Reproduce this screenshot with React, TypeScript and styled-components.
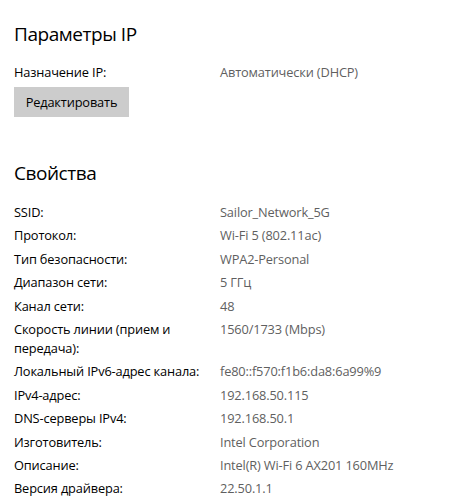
import React from 'react';
import styled, { createGlobalStyle } from 'styled-components';

const GlobalStyle = createGlobalStyle`
  body {
    margin: 0;
    background: #ffffff;
    font-family: 'Open Sans', 'Noto Sans', sans-serif;
    color: #000000;
  }
`;

const Page = styled.div`
  padding: 20px 14px 0 14px;
  display: flex;
  flex-direction: column;
`;

const Heading = styled.h2<{ gapAfter: number }>`
  margin: 0 0 ${({ gapAfter }) => gapAfter}px 0;
  font-size: 19px;
  line-height: 28px;
  font-weight: 400;
  letter-spacing: -0.45px;
`;

const Grid = styled.div`
  display: grid;
  grid-template-columns: 200px 1fr;
  column-gap: 6px;
  row-gap: 4.4px;
`;

const Label = styled.div`
  font-size: 12.8px;
  line-height: 19px;
  letter-spacing: -0.15px;
  color: #000000;
`;

const Value = styled.div`
  font-size: 12.8px;
  line-height: 19px;
  letter-spacing: -0.15px;
  color: #5f5f5f;
`;

const EditButton = styled.button`
  margin-top: 4.5px;
  align-self: flex-start;
  width: 115px;
  height: 30px;
  border: none;
  background: #cccccc;
  font-family: inherit;
  font-size: 12.8px;
  letter-spacing: -0.15px;
  color: #000000;
  padding: 0;
  margin-bottom: 42.5px;
`;

const props: [string, string][] = [
  ['SSID:', 'Sailor_Network_5G'],
  ['Протокол:', 'Wi-Fi 5 (802.11ac)'],
  ['Тип безопасности:', 'WPA2-Personal'],
  ['Диапазон сети:', '5 ГГц'],
  ['Канал сети:', '48'],
  ['Скорость линии (прием и передача):', '1560/1733 (Mbps)'],
  ['Локальный IPv6-адрес канала:', 'fe80::f570:f1b6:da8:6a99%9'],
  ['IPv4-адрес:', '192.168.50.115'],
  ['DNS-серверы IPv4:', '192.168.50.1'],
  ['Изготовитель:', 'Intel Corporation'],
  ['Описание:', 'Intel(R) Wi-Fi 6 AX201 160MHz'],
  ['Версия драйвера:', '22.50.1.1'],
];

export default function App() {
  return (
    <>
      <GlobalStyle />
      <Page>
        <Heading gapAfter={15}>Параметры IP</Heading>
        <Grid>
          <Label>Назначение IP:</Label>
          <Value>Автоматически (DHCP)</Value>
        </Grid>
        <EditButton>Редактировать</EditButton>
        <Heading gapAfter={16}>Свойства</Heading>
        <Grid>
          {props.map(([label, value]) => (
            <React.Fragment key={label}>
              <Label>{label}</Label>
              <Value>{value}</Value>
            </React.Fragment>
          ))}
        </Grid>
      </Page>
    </>
  );
}
